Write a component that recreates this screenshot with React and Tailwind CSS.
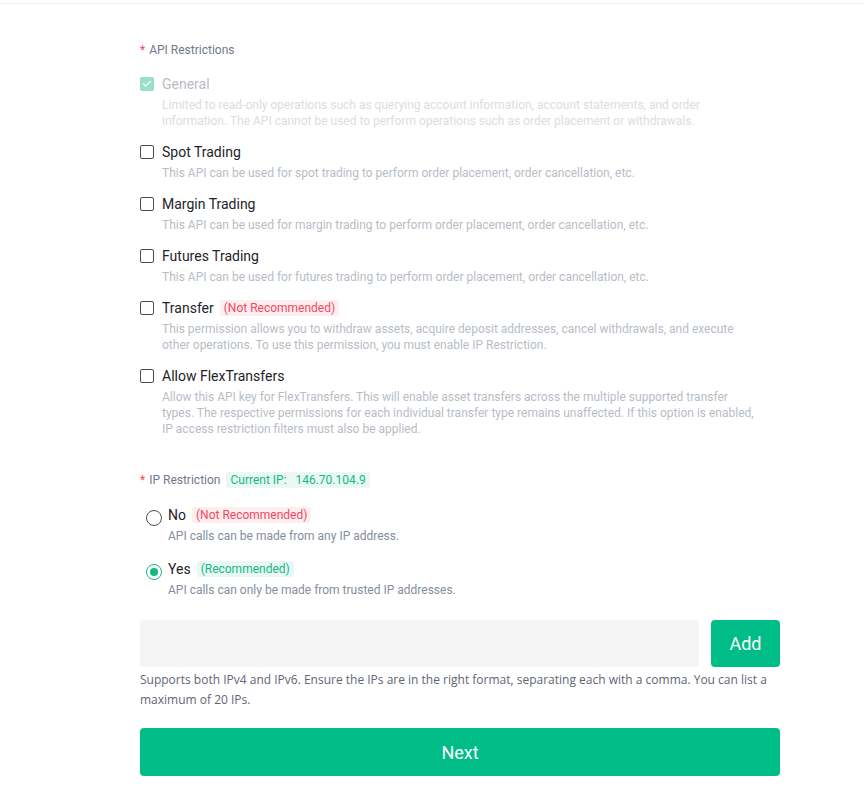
import { Check } from 'lucide-react';

const perms = [
  { title: 'Spot Trading', desc: 'This API can be used for spot trading to perform order placement, order cancellation, etc.' },
  { title: 'Margin Trading', desc: 'This API can be used for margin trading to perform order placement, order cancellation, etc.' },
  { title: 'Futures Trading', desc: 'This API can be used for futures trading to perform order placement, order cancellation, etc.' },
  {
    title: 'Transfer',
    warn: true,
    desc: 'This permission allows you to withdraw assets, acquire deposit addresses, cancel withdrawals, and execute other operations. To use this permission, you must enable IP Restriction.',
  },
  {
    title: 'Allow FlexTransfers',
    desc: 'Allow this API key for FlexTransfers. This will enable asset transfers across the multiple supported transfer types. The respective permissions for each individual transfer type remains unaffected. If this option is enabled, IP access restriction filters must also be applied.',
  },
];

function Label({ children }) {
  return (
    <div className="flex items-center text-[12px] leading-[16px] text-[#707a8a]">
      <span className="text-[#f6465d] mr-[4px]">*</span>
      {children}
    </div>
  );
}

function Badge({ tone, children }) {
  const cls = tone === 'red' ? 'bg-[#fdeef0] text-[#f6465d]' : 'bg-[#e9f8f3] text-[#13b985]';
  return <span className={`ml-[6px] px-[4px] rounded-[2px] text-[12px] leading-[16px] ${cls}`}>{children}</span>;
}

export default function App() {
  return (
    <div className="min-h-[798px] bg-white font-['Roboto',sans-serif]">
      <div className="h-[4px] border-b border-[#ececec]" />
      <div className="w-[640px] ml-[140px] pt-[38px] pb-[22px]">
        <Label>API Restrictions</Label>

        <div className="mt-[18px] flex gap-[8px]">
          <div className="w-[14px] h-[14px] mt-[1px] rounded-[2px] bg-[#99e0c8] flex items-center justify-center shrink-0">
            <Check className="w-[10px] h-[10px] text-white" strokeWidth={3} />
          </div>
          <div>
            <div className="text-[14px] leading-[16px] text-[#b7bdc6]">General</div>
            <p className="mt-[5px] text-[12px] leading-[16px] text-[#dadde2] w-[560px]">
              Limited to read-only operations such as querying account information, account statements, and order information. The API cannot be used to perform operations such as order placement or withdrawals.
            </p>
          </div>
        </div>

        {perms.map((p) => (
          <div key={p.title} className="mt-[15px] flex gap-[8px]">
            <div className="w-[14px] h-[14px] mt-[1px] rounded-[2px] border border-[#474d57] shrink-0" />
            <div>
              <div className="flex items-center text-[14px] leading-[16px] text-[#1e2329]">
                {p.title}
                {p.warn && <Badge tone="red">(Not Recommended)</Badge>}
              </div>
              <p className="mt-[5px] text-[12px] leading-[16px] text-[#b7bdc6] w-[600px]">{p.desc}</p>
            </div>
          </div>
        ))}

        <div className="mt-[35px] flex items-center">
          <Label>IP Restriction</Label>
          <Badge tone="green">Current IP:&nbsp;&nbsp;&nbsp;146.70.104.9</Badge>
        </div>

        <div className="mt-[19px] pl-[6px] flex gap-[6px]">
          <div className="w-[16px] h-[16px] mt-[3px] rounded-full border border-[#474d57] shrink-0" />
          <div>
            <div className="flex items-center text-[14px] leading-[16px] text-[#1e2329]">
              No
              <Badge tone="red">(Not Recommended)</Badge>
            </div>
            <p className="mt-[5px] text-[12px] leading-[16px] text-[#848e9c]">API calls can be made from any IP address.</p>
          </div>
        </div>

        <div className="mt-[17px] pl-[6px] flex gap-[6px]">
          <div className="w-[16px] h-[16px] mt-[3px] rounded-full border border-[#13b985] flex items-center justify-center shrink-0">
            <div className="w-[8px] h-[8px] rounded-full bg-[#13b985]" />
          </div>
          <div>
            <div className="flex items-center text-[14px] leading-[16px] text-[#1e2329]">
              Yes
              <Badge tone="green">(Recommended)</Badge>
            </div>
            <p className="mt-[5px] text-[12px] leading-[16px] text-[#848e9c]">API calls can only be made from trusted IP addresses.</p>
          </div>
        </div>

        <div className="mt-[22px] flex gap-[12px]">
          <input className="flex-1 h-[47px] rounded-[4px] bg-[#f5f5f5] outline-none px-[12px] text-[14px]" />
          <button className="w-[69px] h-[47px] rounded-[4px] bg-[#00bd88] text-white text-[18px]">Add</button>
        </div>
        <p className="mt-[3px] text-[12px] leading-[20px] text-[#5e6673] font-['Open_Sans',sans-serif]">
          Supports both IPv4 and IPv6. Ensure the IPs are in the right format, separating each with a comma. You can list a maximum of 20 IPs.
        </p>

        <button className="mt-[18px] w-full h-[48px] rounded-[4px] bg-[#00bd88] text-white text-[18px]">Next</button>
      </div>
    </div>
  );
}
